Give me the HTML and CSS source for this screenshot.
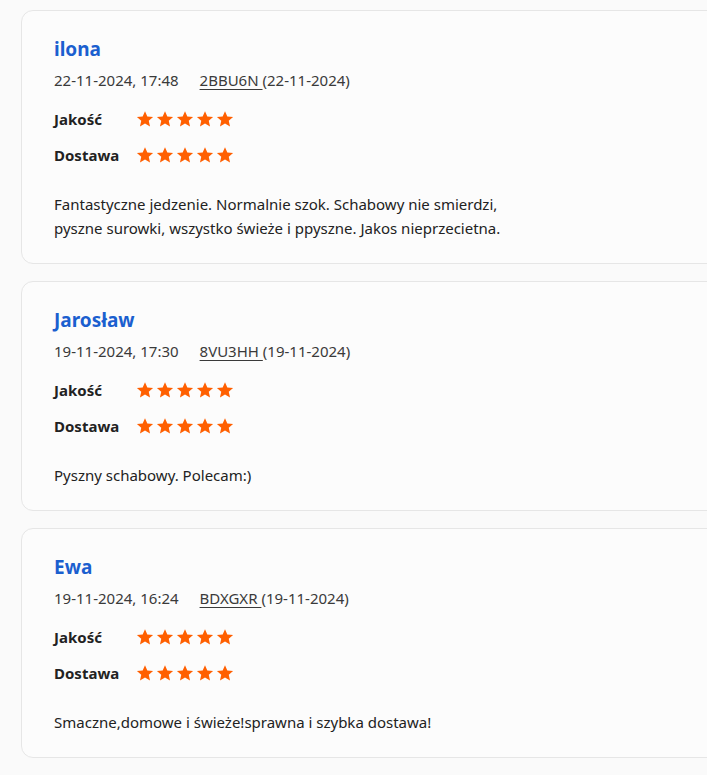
FILE: index.html
```html
<!DOCTYPE html>
<html lang="pl">
<head>
  <meta charset="UTF-8" />
  <title>Opinie</title>
  <meta name="viewport" content="width=device-width, initial-scale=1" />
  <link rel="stylesheet" href="styles.css">
</head>
<body>

  <svg width="0" height="0" class="defs">
    <symbol id="star" viewBox="0 0 24 24">
      <path d="M12 1.5l3.1 7.1 7.7.7-5.8 5.1 1.7 7.6L12 18.1 5.3 22l1.7-7.6-5.8-5.1 7.7-.7z"/>
    </symbol>
  </svg>

  <div class="reviews">
    <section class="review">
      <h3 class="author">ilona</h3>
      <div class="meta">
        <span class="date">22-11-2024, 17:48</span>
        <span class="order"><a href="#">2BBU6N </a>(22-11-2024)</span>
      </div>
      <div class="ratings">
        <div class="rating"><span class="label">Jakość</span><span class="stars" data-n="5"></span></div>
        <div class="rating"><span class="label">Dostawa</span><span class="stars" data-n="5"></span></div>
      </div>
      <p class="comment">Fantastyczne jedzenie. Normalnie szok. Schabowy nie smierdzi,<br>pyszne surowki, wszystko świeże i ppyszne. Jakos nieprzecietna.</p>
    </section>

    <section class="review">
      <h3 class="author">Jarosław</h3>
      <div class="meta">
        <span class="date">19-11-2024, 17:30</span>
        <span class="order"><a href="#">8VU3HH </a>(19-11-2024)</span>
      </div>
      <div class="ratings">
        <div class="rating"><span class="label">Jakość</span><span class="stars" data-n="5"></span></div>
        <div class="rating"><span class="label">Dostawa</span><span class="stars" data-n="5"></span></div>
      </div>
      <p class="comment">Pyszny schabowy. Polecam:)</p>
    </section>

    <section class="review">
      <h3 class="author">Ewa</h3>
      <div class="meta">
        <span class="date">19-11-2024, 16:24</span>
        <span class="order"><a href="#">BDXGXR </a>(19-11-2024)</span>
      </div>
      <div class="ratings">
        <div class="rating"><span class="label">Jakość</span><span class="stars" data-n="5"></span></div>
        <div class="rating"><span class="label">Dostawa</span><span class="stars" data-n="5"></span></div>
      </div>
      <p class="comment">Smaczne,domowe i świeże!sprawna i szybka dostawa!</p>
    </section>

    <section class="review"></section>
  </div>

  <script>
    // fill star ratings
    document.querySelectorAll('.stars').forEach(el => {
      const n = Number(el.dataset.n) || 0;
      for (let i = 0; i < n; i++) {
        el.insertAdjacentHTML('beforeend', '<svg class="star"><use href="#star"/></svg>');
      }
    });
  </script>
</body>
</html>
```

FILE: styles.css
```css
:root {
  --blue: #1b5fcf;
  --orange: #ff5f00;
  --text: #222;
  --muted: #3a3a3a;
  --border: #e6e6e6;
  --card-bg: #fcfcfc;
  --radius: 12px;
}

* {
  box-sizing: border-box;
}

html, body {
  overflow: hidden;
}

body {
  margin: 0;
  background: #fafafa;
  font-family: 'Noto Sans', 'Open Sans', sans-serif;
  color: var(--text);
}

.defs {
  position: absolute;
}

.reviews {
  width: 780px;
  padding: 10px 0 0 21px;
  display: flex;
  flex-direction: column;
  gap: 17px;
}

.review {
  background: var(--card-bg);
  border: 1px solid var(--border);
  border-radius: var(--radius);
  padding: 26px 32px 23px;
  min-height: 60px;
}

.author {
  margin: 0;
  font-size: 19px;
  line-height: 24px;
  font-weight: 700;
  color: var(--blue);
}

.meta {
  margin-top: 9px;
  font-size: 15px;
  line-height: 20px;
  color: var(--muted);
  display: flex;
  gap: 21px;
}

.order a {
  color: var(--muted);
  text-decoration: underline;
  text-underline-offset: 3px;
}

.ratings {
  margin-top: 17px;
  display: flex;
  flex-direction: column;
  gap: 12px;
}

.rating {
  display: flex;
  align-items: center;
  height: 24px;
}

.label {
  width: 82px;
  font-size: 15px;
  font-weight: 700;
  color: var(--text);
}

.stars {
  display: flex;
  gap: 2px;
}

.star {
  width: 18px;
  height: 18px;
  fill: var(--orange);
}

.comment {
  margin: 25px 0 0;
  font-size: 15px;
  line-height: 24px;
  color: var(--text);
}
```
